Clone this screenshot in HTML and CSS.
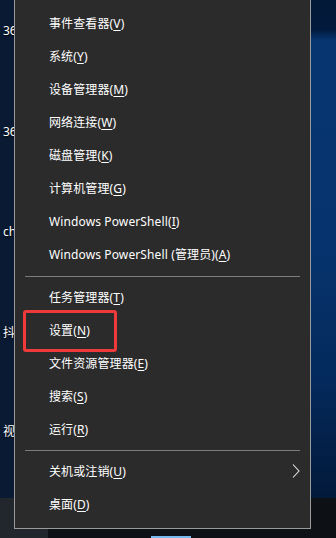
FILE: index.html
```html
<!DOCTYPE html>
<html lang="zh-CN">
<head>
<meta charset="utf-8">
<title>Win+X 菜单</title>
<link rel="stylesheet" href="styles.css">
</head>
<body>
<div class="screen">
  <div class="desktop">
    <div class="icons">
      <div class="icon-label l1">360</div>
      <div class="icon-label l2">360</div>
      <div class="icon-label l3">chr</div>
      <div class="icon-label l4">抖音</div>
      <div class="icon-label l5">视频</div>
    </div>
  </div>
  <div class="taskbar">
    <div class="start"></div>
    <div class="tasks"><span class="active"></span></div>
  </div>

  <div class="menu">
    <div class="item">事件查看器(<u>V</u>)</div>
    <div class="item">系统(<u>Y</u>)</div>
    <div class="item">设备管理器(<u>M</u>)</div>
    <div class="item">网络连接(<u>W</u>)</div>
    <div class="item">磁盘管理(<u>K</u>)</div>
    <div class="item">计算机管理(<u>G</u>)</div>
    <div class="item">Windows PowerShell(<u>I</u>)</div>
    <div class="item">Windows PowerShell (管理员)(<u>A</u>)</div>
    <div class="sep"></div>
    <div class="item">任务管理器(<u>T</u>)</div>
    <div class="item highlighted">设置(<u>N</u>)</div>
    <div class="item">文件资源管理器(<u>E</u>)</div>
    <div class="item">搜索(<u>S</u>)</div>
    <div class="item">运行(<u>R</u>)</div>
    <div class="sep sep2"></div>
    <div class="item has-sub">关机或注销(<u>U</u>)
      <svg class="chev" width="8" height="14" viewBox="0 0 8 14"><path d="M1 0.5 L7 7 L1 13.5" fill="none" stroke="#e6e6e6" stroke-width="1.1"/></svg>
    </div>
    <div class="item">桌面(<u>D</u>)</div>
  </div>
</div>
</body>
</html>
```

FILE: styles.css
```css
html, body {
  margin: 0;
  padding: 0;
}
body {
  width: 336px;
  height: 538px;
  overflow: hidden;
  font-family: "Noto Sans", "Noto Sans CJK SC", sans-serif;
}
.screen {
  position: relative;
  width: 336px;
  height: 538px;
  display: flex;
  flex-direction: column;
}
.desktop {
  position: relative;
  height: 498px;
  background:
    linear-gradient(to right, #0a1a33 0, #0a1a33 14px, transparent 14px),
    linear-gradient(to bottom, #021836 0, #021a3d 30px, #073570 40px, #06336d 250px, #042a5c 380px, #03214a 440px, #02193a 498px);
}
.icons {
  position: relative;
  width: 14px;
  height: 498px;
  overflow: hidden;
}
.icon-label {
  position: absolute;
  left: 3px;
  font-size: 12px;
  line-height: 14px;
  color: #ffffff;
  white-space: nowrap;
  text-shadow: 0 1px 2px #000;
}
.l1 { top: 24px; }
.l2 { top: 125px; }
.l3 { top: 225px; }
.l4 { top: 326px; }
.l5 { top: 425px; }

.taskbar {
  height: 40px;
  display: flex;
  background: #0d1015;
}
.start {
  width: 48px;
  background: #22262d;
}
.tasks {
  flex: 1;
  position: relative;
}
.active {
  position: absolute;
  left: 103px;
  width: 40px;
  bottom: 0;
  height: 2px;
  background: #76b9ed;
}

.menu {
  position: absolute;
  left: 14px;
  top: -4px;
  width: 295px;
  background: #2b2b2b;
  border: 1px solid #9a9a9a;
  padding: 10px 0 7px;
}
.item {
  position: relative;
  height: 33px;
  line-height: 33px;
  padding-left: 34px;
  font-size: 12px;
  letter-spacing: 0.12px;
  color: #ffffff;
  white-space: nowrap;
}
.item u {
  text-decoration: underline;
  text-underline-offset: 2px;
}
.sep {
  height: 10px;
  display: flex;
  align-items: center;
  padding: 0 10px;
}
.sep::before {
  content: "";
  flex: 1;
  height: 1px;
  background: #7c7c7c;
}
.sep2 {
  height: 9px;
}
.has-sub .chev {
  position: absolute;
  right: 10px;
  top: 9px;
}
.highlighted::after {
  content: "";
  position: absolute;
  left: 8px;
  top: -4px;
  width: 88px;
  height: 36px;
  border: 3px solid #ee3a3a;
  border-radius: 3px;
}
```
